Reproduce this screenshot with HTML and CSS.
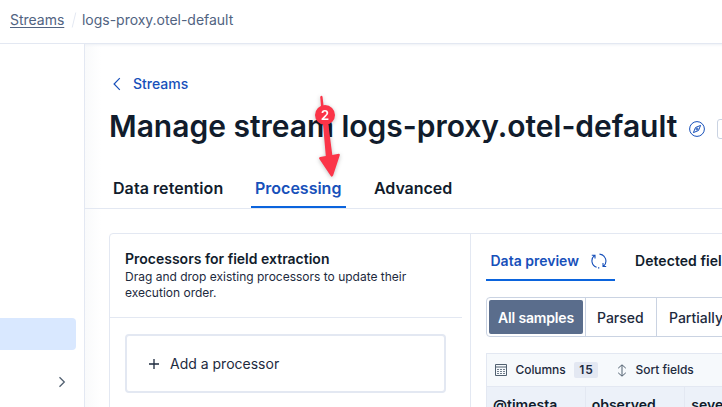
FILE: index.html
```html
<!DOCTYPE html>
<html lang="en">
<head>
<meta charset="utf-8">
<title>Manage stream</title>
<link rel="stylesheet" href="styles.css">
</head>
<body>
<div class="app">
  <header class="topbar">
    <a class="crumb crumb-link">Streams</a>
    <svg class="crumb-sep" width="6" height="16" viewBox="0 0 6 16"><path d="M4.8 .5 1.2 15.500" /></svg>
    <span class="crumb">logs-proxy.otel-default</span>
  </header>
  <div class="body">
    <aside class="sidebar">
      <div class="nav-active"></div>
      <svg class="nav-chevron" width="8" height="12" viewBox="0 0 8 12"><path d="M1.500 1.200 6.300 6 1.500 10.800"/></svg>
    </aside>
    <main class="main">
      <a class="back">
        <svg width="10" height="14" viewBox="0 0 10 14"><path d="M7.800 1.200 2.100 7l5.700 5.800"/></svg>
        <span class="back-label">Streams</span>
      </a>
      <div class="title-row">
        <h1 class="title">Manage stream logs-proxy.otel-default</h1>
        <svg class="compass" width="16" height="16" viewBox="0 0 16 16"><circle cx="8" cy="8" r="7.400"/><path d="M11.600 4.400 9.500 9.500 4.400 11.600 6.500 6.500Z"/><circle cx="8" cy="8" r="1"/></svg>
        <span class="badge-edge"></span>
      </div>
      <nav class="tabs">
        <a class="tab tab-retention">Data retention</a>
        <a class="tab tab-processing active">Processing</a>
        <a class="tab tab-advanced">Advanced</a>
      </nav>
      <div class="panel">
        <section class="processors">
          <div class="proc-head">
            <h2 class="proc-title">Processors for field extraction</h2>
            <p class="proc-text">Drag and drop existing processors to update their<br>execution order.</p>
          </div>
          <div class="add">
            <svg width="10" height="10" viewBox="0 0 10 10"><path d="M5 0v10M0 5h10"/></svg>
            <span class="add-label">Add a processor</span>
          </div>
        </section>
        <section class="preview">
          <nav class="subtabs">
            <a class="subtab active"><span class="sub-label">Data preview</span>
              <svg class="refresh" width="16" height="16" viewBox="0 0 16 16"><path d="M5.600 14.300A6.800 6.800 0 0 1 3.300 2.700M.8 2.200H4V5.500M8.500 1.100a6.900 6.900 0 0 1 4.200 11.900M15.200 13.500H12V10M8.300 14.900H7"/></svg>
            </a>
            <a class="subtab detected">Detected fields</a>
          </nav>
          <div class="filters">
            <span class="filter selected"><b>All samples</b></span>
            <span class="filter parsed">Parsed</span>
            <span class="filter partial">Partially</span>
          </div>
          <div class="grid">
            <div class="toolbar">
              <svg class="table-icon" width="12" height="12" viewBox="0 0 12 12"><path d="M.5.5h11v11H.5ZM.5 3h11"/><path class="dash" d="M2 5.500h8M2 7.500h8M2 9.500h8"/></svg>
              <span class="columns">Columns</span>
              <span class="count">15</span>
              <svg class="sort-icon" width="10" height="13" viewBox="0 0 10 13"><path d="M5 1v11M1.200 4.200 5 .8l3.800 3.400M1.200 8.800 5 12.200l3.800-3.400"/></svg>
              <span class="sort">Sort fields</span>
            </div>
            <div class="cols">
              <span class="col">@timesta</span>
              <span class="col">observed</span>
              <span class="col">severity</span>
            </div>
          </div>
        </section>
      </div>
    </main>
  </div>
  <svg class="callout" width="40" height="100" viewBox="0 0 40 100">
    <path d="M10.200 7Q11.200 4.800 12.500 6.500L14.300 22 18.300 34 22.300 65 28.800 63.700Q30.200 63.800 29.700 65.500L23.100 85.600Q21.900 87.700 20.600 85.800L9.200 68.700Q8.600 67.200 10.200 66.900L15.800 66 13 34 11.500 22Z"/>
    <circle cx="15" cy="25" r="10"/>
    <text x="15" y="29.800" text-anchor="middle">2</text>
  </svg>
</div>
</body>
</html>
```
FILE: styles.css
```css
* { box-sizing: border-box; }
body { margin: 0; font-family: Inter, "Liberation Sans", sans-serif; color: #111c2c; background: #fff; }
h1, h2, p { margin: 0; }
svg { flex: none; fill: none; display: block; }
.app { position: relative; width: 722px; height: 407px; overflow: hidden; display: flex; flex-direction: column; }
.topbar { height: 44px; flex: none; border-bottom: 1px solid #e3e8f2; display: flex; align-items: center; padding: 0 0 4px 10px; font-size: 14px; color: #516381; white-space: nowrap; }
.crumb { letter-spacing: -.02px; }
.crumb-link { text-decoration: underline; text-underline-offset: 2px; width: 55px; }
.crumb-sep { margin: 0 5px 0 6px; stroke: #e3e8f2; }
.body { flex: 1; display: flex; min-height: 0; }
.sidebar { width: 85px; flex: none; border-right: 1px solid #e3e8f2; padding-top: 274px; }
.nav-active { width: 76px; height: 32px; border-radius: 0 4px 4px 0; background: #d9e8ff; }
.nav-chevron { margin: 26px 0 0 58px; stroke: #516070; stroke-width: 1.3; }
.main { flex: none; width: 637px; overflow: hidden; background: linear-gradient(90deg, #f9fafb, #fff 16px); box-shadow: inset 0 3px 3px -2px #edf0f5; }
.back { display: flex; align-items: center; height: 20px; margin: 30px 0 0 27px; color: #1750ba; font-size: 14px; font-weight: 500; }
.back svg { stroke: #1750ba; stroke-width: 1.2; margin-right: 11px; }
.back-label { margin-top: -2px; }
.title-row { display: flex; align-items: center; height: 40px; margin: 13px 0 0 24px; white-space: nowrap; }
.title { width: 580px; flex: none; font-size: 30px; line-height: 40px; font-weight: 600; letter-spacing: -.015px; margin-top: -2px; }
.compass { stroke: #1750ba; margin-top: 4px; }
.badge-edge { width: 20px; height: 20px; flex: none; margin: 4px 0 0 12px; border: 1px solid #cad3e2; border-radius: 3px; }
.tabs { display: flex; height: 62px; padding-left: 24px; border-bottom: 1px solid #e3e8f2; align-items: flex-end; }
.tab { height: 40px; line-height: 40px; font-size: 16px; font-weight: 600; padding: 0 4px; white-space: nowrap; }
.tab-retention { width: 118px; letter-spacing: .07px; }
.tab-processing { width: 95px; margin: 0 24px; }
.tab-advanced { letter-spacing: -.05px; }
.active { color: #1750ba; box-shadow: inset 0 -2px #0b64dd; }
.panel { width: 640px; height: 220px; margin: 24px 0 0 24px; border: 1px solid #e3e8f2; border-radius: 4px 0 0; display: flex; background: #fff; }
.processors { width: 361px; flex: none; border-right: 1px solid #e3e8f2; }
.proc-head { height: 84px; width: 352px; border-bottom: 1px solid #e3e8f2; padding: 15px 0 0 15px; }
.proc-title { font-size: 14px; line-height: 20px; font-weight: 600; }
.proc-text { font-size: 12px; line-height: 16px; color: #1d2a3e; white-space: nowrap; }
.add { width: 321px; height: 59px; margin: 16px 0 0 15px; border: 2px solid #e3e8f2; border-radius: 4px; display: flex; align-items: center; padding-left: 22px; font-size: 14px; color: #1d2a3e; }
.add svg { stroke: #1d2a3e; stroke-width: 1.3; margin-right: 11px; }
.preview { padding-left: 15px; flex: none; }
.subtabs { display: flex; height: 48px; padding-top: 6px; font-size: 14px; font-weight: 600; }
.subtab { display: flex; align-items: center; height: 41px; white-space: nowrap; }
.subtab.active { width: 129px; padding-left: 4.5px; }
.refresh { stroke: #1750ba; stroke-width: 1.1; margin-left: 12px; }
.detected { margin-left: 20px; letter-spacing: .05px; }
.filters { display: flex; width: 300px; height: 40px; margin-top: 15px; border: 1px solid #cad3e2; border-radius: 4px; font-size: 14px; font-weight: 500; }
.filter { border-right: 1px solid #cad3e2; display: flex; align-items: center; flex: none; color: #1d2a3e; }
.filter b { display: flex; align-items: center; justify-content: center; width: 94px; height: 34px; margin-left: 2px; border-radius: 2px; background: #5a6d8c; color: #fff; font-weight: 600; letter-spacing: -.15px; white-space: nowrap; }
.selected { width: 99px; }
.parsed { width: 71px; padding-left: 11px; }
.partial { width: 120px; padding-left: 12px; }
.grid { width: 300px; height: 70px; margin-top: 16px; border: 1px solid #e3e8f2; }
.toolbar { height: 33px; border-bottom: 1px solid #e3e8f2; background: #f6f9fc; display: flex; align-items: center; padding-left: 8px; font-size: 12px; font-weight: 500; color: #1d2a3e; }
.table-icon { stroke: #516070; stroke-width: 1; }
.dash { stroke-dasharray: 2 1; stroke-width: .8; }
.columns { width: 50px; margin: -1px 8px 0 8.500px; letter-spacing: -.08px; }
.count { width: 24px; height: 16px; line-height: 16px; margin-left: .5px; border-radius: 2px; background: #e3e8f2; text-align: center; letter-spacing: 1px; padding-left: 1px; font-weight: 600; }
.sort-icon { stroke: #516070; stroke-width: 1; margin: 0 8.500px 0 19px; }
.sort { margin-top: -1px; letter-spacing: -.04px; }
.cols { display: flex; height: 40px; background: #ecf1f9; font-size: 14px; font-weight: 600; line-height: 20px; }
.col { width: 100px; padding: 8px 0 0 6px; border-right: 1px solid #e3e8f2; }
.col:first-child { width: 99px; }
.callout { position: absolute; left: 310px; top: 90px; fill: #fb3448; filter: drop-shadow(0 1px 2px rgba(0,0,0,.25)); }
.callout text { fill: #fff; font-size: 13.500px; font-weight: 600; }
```
